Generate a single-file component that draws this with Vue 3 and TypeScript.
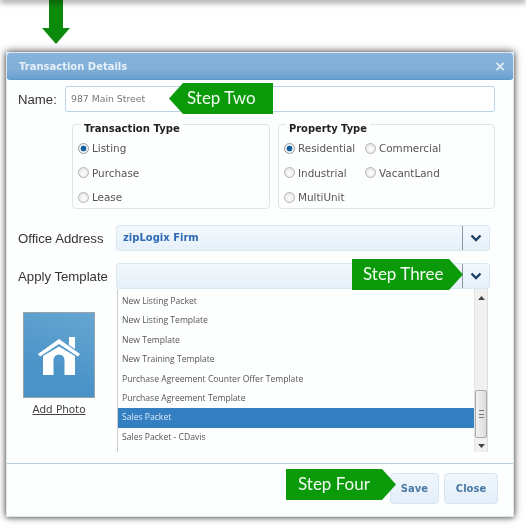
<template>
  <div class="page">
    <div class="top-edge"></div>
    <svg class="down-arrow" width="28" height="44" viewBox="0 0 28 44">
      <path d="M7 0H21V28H28L14 44L0 28H7Z" fill="#0c8a0c" />
    </svg>

    <div class="modal">
      <div class="modal-head">
        <span class="modal-title">Transaction Details</span>
        <span class="modal-x">×</span>
      </div>

      <div class="name-row">
        <label class="field-label name-label">Name:</label>
        <div class="name-input">987 Main Street</div>
        <div class="step step-left step-two">Step Two</div>
      </div>

      <div class="groups">
        <fieldset class="group group-trans">
          <legend>Transaction Type</legend>
          <div class="radio-col">
            <div v-for="t in transactionTypes" :key="t" class="radio-item">
              <span class="radio" :class="{ on: t === 'Listing' }"></span>{{ t }}
            </div>
          </div>
        </fieldset>
        <fieldset class="group group-prop">
          <legend>Property Type</legend>
          <div class="radio-grid">
            <div v-for="p in propertyTypes" :key="p" class="radio-item">
              <span class="radio" :class="{ on: p === 'Residential' }"></span>{{ p }}
            </div>
          </div>
        </fieldset>
      </div>

      <div class="select-row office-row">
        <label class="field-label">Office Address</label>
        <div class="select">
          <span class="select-value">zipLogix Firm</span>
          <span class="select-btn">
            <svg width="12" height="8" viewBox="0 0 12 8"><path d="M1.5 1.5L6 6L10.5 1.5" fill="none" stroke="#1d4068" stroke-width="2.4" /></svg>
          </span>
        </div>
      </div>

      <div class="select-row apply-row">
        <label class="field-label">Apply Template</label>
        <div class="select">
          <span class="select-value"></span>
          <span class="select-btn">
            <svg width="12" height="8" viewBox="0 0 12 8"><path d="M1.5 1.5L6 6L10.5 1.5" fill="none" stroke="#1d4068" stroke-width="2.4" /></svg>
          </span>
        </div>
        <div class="step step-right step-three">Step Three</div>
      </div>

      <div class="lower">
        <div class="photo-col">
          <div class="photo">
            <svg width="44" height="40" viewBox="0 0 44 40">
              <path d="M32 1H38V13L32 9Z" fill="#fff" />
              <path d="M1 18L22 3L43 18L41 20.5L22 8L3 20.5Z" fill="#fff" />
              <path fill-rule="evenodd" d="M6 20L22 10.5L38 20V39H27.5V24A5.5 5.5 0 0 0 16.5 24V39H6Z" fill="#fff" />
            </svg>
          </div>
          <a class="add-photo">Add Photo</a>
        </div>

        <div class="list">
          <div class="list-rows">
            <div v-for="item in templates" :key="item" class="list-row" :class="{ selected: item === 'Sales Packet' }">{{ item }}</div>
          </div>
          <div class="scrollbar">
            <svg class="sb-arrow" width="7" height="4" viewBox="0 0 7 4"><path d="M0 4L3.5 0L7 4Z" fill="#444" /></svg>
            <div class="sb-thumb"><span></span></div>
            <svg class="sb-arrow" width="7" height="4" viewBox="0 0 7 4"><path d="M0 0L3.5 4L7 0Z" fill="#444" /></svg>
          </div>
        </div>
      </div>

      <div class="modal-foot">
        <div class="step step-right step-four">Step Four</div>
        <button class="btn">Save</button>
        <button class="btn">Close</button>
      </div>
    </div>
  </div>
</template>

<script setup lang="ts">
const transactionTypes: string[] = ['Listing', 'Purchase', 'Lease']
const propertyTypes: string[] = ['Residential', 'Commercial', 'Industrial', 'VacantLand', 'MultiUnit']
const templates: string[] = [
  'New Listing Packet',
  'New Listing Template',
  'New Template',
  'New Training Template',
  'Purchase Agreement Counter Offer Template',
  'Purchase Agreement Template',
  'Sales Packet',
  'Sales Packet - CDavis',
  'SPECIAL LISTING PACKET'
]
</script>

<style>
html,
body {
  background: #fff;
}
</style>

<style scoped>
.page {
  position: relative;
  width: 526px;
  height: 528px;
  overflow: hidden;
  background: #fff;
  font-family: "DejaVu Sans", sans-serif;
  filter: blur(0.35px);
}

.top-edge {
  position: absolute;
  left: 0;
  right: 0;
  top: -4px;
  height: 4px;
  box-shadow: 0 2px 6px rgba(0, 0, 0, 0.55);
}

.down-arrow {
  display: block;
  margin-left: 42px;
}

.modal {
  margin: 8px 0 0 6px;
  width: 508px;
  height: 465px;
  background: #fdfefe;
  border: 1px solid #dfe6ea;
  box-sizing: border-box;
  box-shadow: 0 -1px 8px rgba(0, 0, 0, 0.55), 0 1px 5px rgba(0, 0, 0, 0.4);
}

.modal-head {
  height: 27px;
  border-radius: 3px;
  background: linear-gradient(#85b3da, #80afd8 60%, #6ba0ce);
  border-bottom: 1px solid #5d98cb;
  box-sizing: border-box;
  display: flex;
  align-items: center;
  justify-content: space-between;
  padding: 0 7px 0 12px;
}

.modal-title {
  font-size: 10px;
  font-weight: bold;
  color: #e6f0f8;
}

.modal-x {
  font-size: 14px;
  font-weight: bold;
  color: #dfe9f2;
  line-height: 1;
}

.field-label {
  font-family: "Liberation Sans", sans-serif;
  font-size: 13.2px;
  color: #333;
}

.name-row {
  position: relative;
  display: flex;
  align-items: center;
  margin-top: 6px;
  padding-left: 11px;
  height: 26px;
}

.name-label {
  width: 47px;
}

.name-input {
  width: 430px;
  height: 26px;
  box-sizing: border-box;
  border: 1px solid #b9d3e8;
  border-radius: 3px;
  background: #fff;
  padding-left: 5px;
  font-size: 9.3px;
  line-height: 24px;
  color: #777;
}

.step {
  position: absolute;
  height: 31px;
  background: #0a9a0a;
  color: #f2fbf2;
  font-family: Lato, sans-serif;
  font-size: 17px;
  line-height: 30px;
  box-sizing: border-box;
}

.step-left {
  padding-left: 18px;
  clip-path: polygon(0 50%, 14px 0, 100% 0, 100% 100%, 14px 100%);
}

.step-right {
  padding-left: 11px;
  clip-path: polygon(0 0, calc(100% - 14px) 0, 100% 50%, calc(100% - 14px) 100%, 0 100%);
}

.step-two {
  left: 162px;
  top: -3px;
  width: 104px;
}

.step-three {
  left: 345px;
  top: -4px;
  width: 111px;
}

.step-four {
  left: 279px;
  top: 5px;
  width: 110px;
  height: 31px;
  padding-left: 12px;
}

.groups {
  display: flex;
  gap: 8px;
  margin-top: 7px;
  padding-left: 65px;
}

.group {
  margin: 0;
  padding: 0 0 0 5px;
  height: 90px;
  box-sizing: border-box;
  border: 1px solid #dfe5ea;
  border-radius: 4px;
}

.group-trans {
  width: 198px;
}

.group-prop {
  width: 217px;
}

.group legend {
  position: relative;
  top: 4px;
  padding: 0 3px 0 3px;
  margin-left: 3px;
  font-size: 10.1px;
  font-weight: bold;
  line-height: 11px;
  color: #222;
}

.group-prop legend {
  margin-left: 2px;
  font-size: 9.9px;
}

.radio-col,
.radio-grid {
  padding-top: 6px;
}

.radio-grid {
  display: grid;
  grid-template-columns: 81px auto;
  justify-content: start;
}

.radio-item {
  display: flex;
  align-items: center;
  height: 24.5px;
  font-size: 10.4px;
  color: #555;
  white-space: nowrap;
}

.radio {
  width: 11px;
  height: 11px;
  margin-right: 3px;
  border-radius: 50%;
  border: 1px solid #b4b4b4;
  box-sizing: border-box;
  background: radial-gradient(circle at 50% 60%, #fff, #dedede);
}

.radio.on {
  background: radial-gradient(circle, #0f5f9e 0 2.6px, #eef3f6 3.2px);
  border-color: #9a9a9a;
}

.select-row {
  position: relative;
  display: flex;
  align-items: center;
  padding-left: 11px;
  height: 26px;
}

.office-row {
  margin-top: 16px;
}

.apply-row {
  margin-top: 12px;
}

.select-row .field-label {
  width: 98px;
}

.select {
  width: 374px;
  height: 26px;
  display: flex;
  box-sizing: border-box;
  border: 1px solid #dbe7f1;
  border-radius: 3px;
  background: linear-gradient(#f3f8fc, #e6f0f9);
}

.select-value {
  flex: 1;
  padding-left: 6px;
  font-size: 10px;
  font-weight: bold;
  line-height: 24px;
  color: #2f6bb5;
}

.select-btn {
  width: 26px;
  border-left: 1px solid #8b98a3;
  display: flex;
  align-items: center;
  justify-content: center;
}

.lower {
  display: flex;
  height: 174px;
}

.photo-col {
  width: 110px;
  padding: 23px 0 0 16px;
  box-sizing: border-box;
}

.photo {
  width: 72px;
  height: 86px;
  box-sizing: border-box;
  border: 1px solid #98a4ac;
  background: linear-gradient(200deg, #66a7d1, #4a93c8 70%);
  display: flex;
  align-items: center;
  justify-content: center;
  padding-top: 2px;
}

.add-photo {
  display: block;
  width: 72px;
  margin-top: 5px;
  text-align: center;
  font-size: 10.4px;
  line-height: 12px;
  color: #444;
  text-decoration: underline;
  white-space: nowrap;
}

.list {
  width: 371px;
  height: 163px;
  box-sizing: border-box;
  border-left: 1px solid #ccc;
  display: flex;
  overflow: hidden;
}

.list-rows {
  flex: 1;
  padding-top: 3px;
  overflow: hidden;
}

.list-row {
  height: 19.4px;
  line-height: 19px;
  padding-left: 4px;
  font-family: "Open Sans", sans-serif;
  font-size: 8.6px;
  color: #555;
  white-space: nowrap;
}

.list-row.selected {
  background: #337fc2;
  color: #dbe9f5;
}

.scrollbar {
  position: relative;
  width: 14px;
  background: #f0f0f0;
  border-left: 1px solid #e3e3e3;
  border-right: 1px solid #ddd;
  box-sizing: border-box;
  display: flex;
  flex-direction: column;
  align-items: center;
  justify-content: space-between;
  padding: 7px 0 4px;
}

.sb-thumb {
  position: absolute;
  left: 0;
  top: 101px;
  width: 12px;
  height: 48px;
  box-sizing: border-box;
  border: 1px solid #a9a9a9;
  border-radius: 2px;
  background: linear-gradient(90deg, #f2f2f2, #dcdcdc);
  display: flex;
  align-items: center;
  justify-content: center;
}

.sb-thumb span {
  width: 5px;
  height: 6px;
  border-top: 1px solid #777;
  border-bottom: 1px solid #777;
  background: linear-gradient(#777, #777) center / 100% 1px no-repeat;
}

.modal-foot {
  position: relative;
  margin-top: 0;
  border-top: 1px solid #b5d0e6;
  display: flex;
  justify-content: flex-end;
  gap: 5px;
  padding: 9px 15px 0 0;
  height: 52px;
  box-sizing: border-box;
}

.btn {
  width: 49px;
  height: 31px;
  padding: 0;
  border: 1px solid #d6e5f2;
  border-radius: 4px;
  background: linear-gradient(#f0f6fc, #e3eef8);
  font-family: "DejaVu Sans", sans-serif;
  font-size: 10px;
  font-weight: bold;
  color: #4a7aa5;
}

.btn + .btn {
  width: 54px;
}
</style>
